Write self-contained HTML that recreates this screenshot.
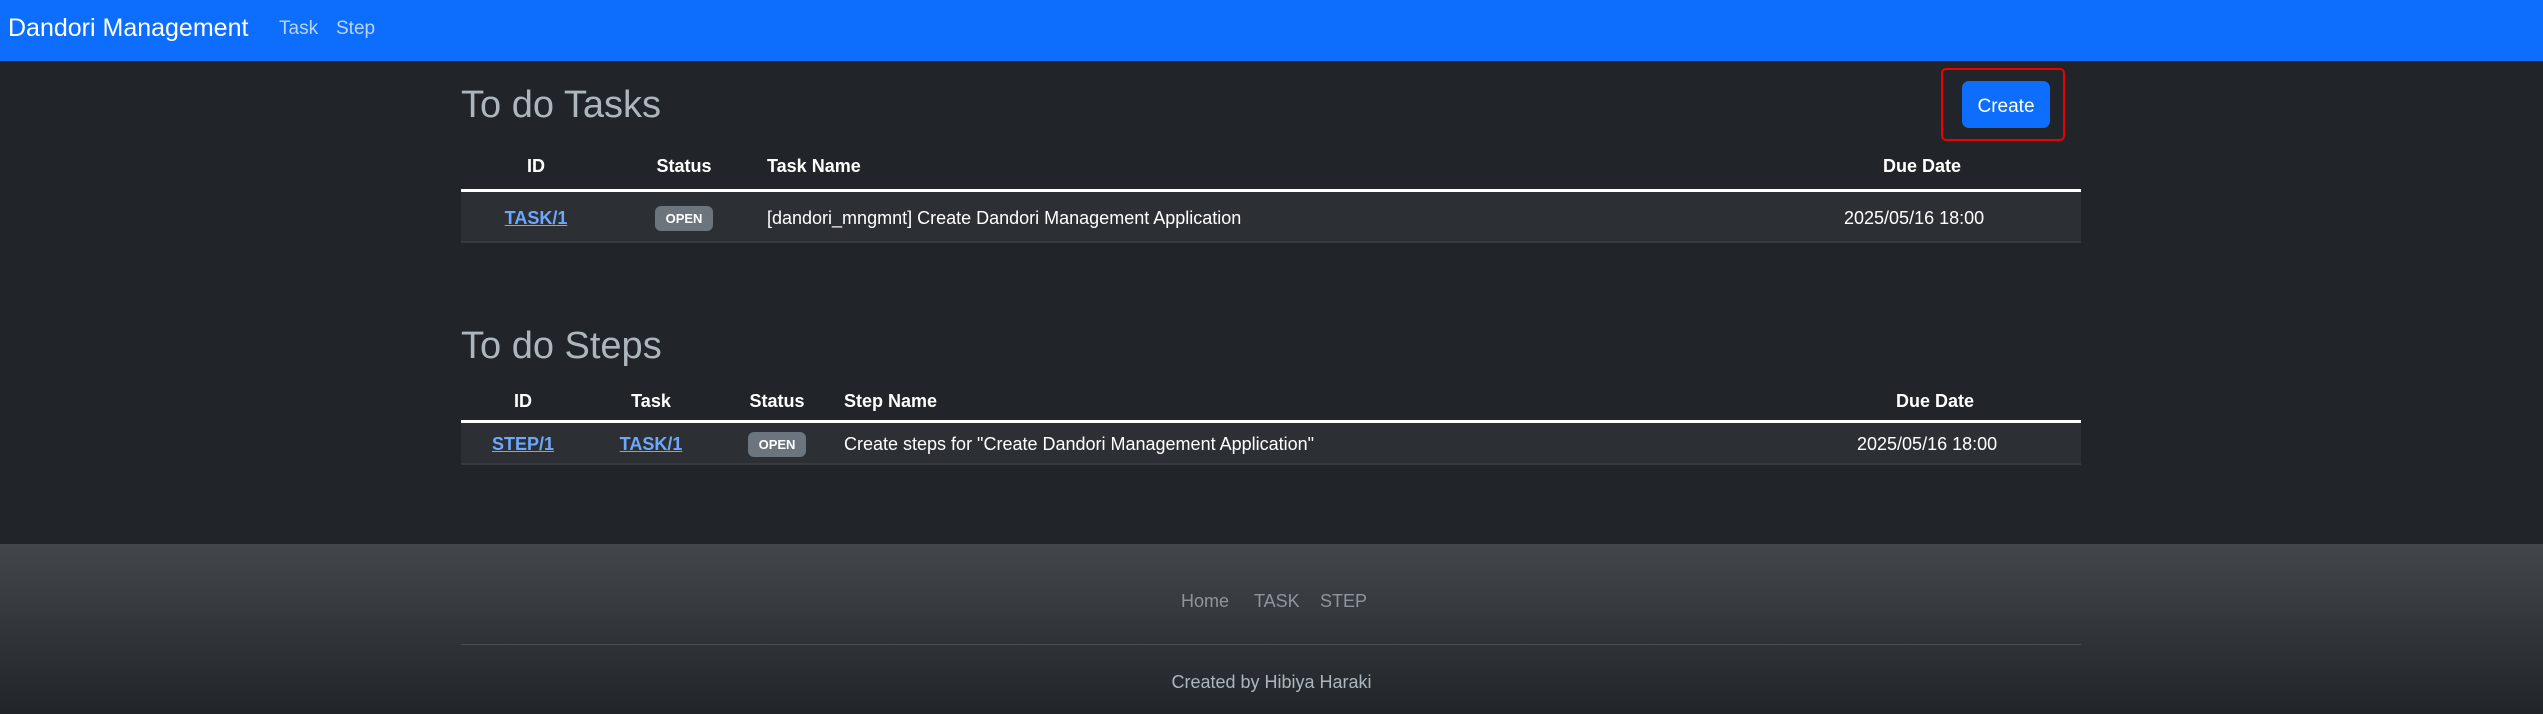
<!DOCTYPE html>
<html><head><meta charset="utf-8"><style>
*{margin:0;padding:0;box-sizing:border-box}
body{width:2543px;height:714px;background:#212529;font-family:"Liberation Sans",sans-serif;color:#dee2e6;position:relative;overflow:hidden}
.a{position:absolute;white-space:nowrap}
.nav{position:absolute;left:0;top:0;width:2543px;height:61px;background:#0d6efd}
.brand{left:8px;top:14px;font-size:25px;color:#fff}
.nl{top:18px;font-size:19px;color:#b6d4fe}
h2{position:absolute;font-size:38px;font-weight:500;color:#adb5bd}
.th{font-size:18px;font-weight:bold;color:#fff;transform:translateX(-50%)}
.thl{font-size:18px;font-weight:bold;color:#fff}
.line{position:absolute;left:461px;width:1620px;height:3px;background:#fff}
.row{position:absolute;left:461px;width:1620px;background:#2c3034;border-bottom:2px solid #373b3e}
.td{font-size:18px;color:#fff}
.lnk{color:#6ea8fe;text-decoration:underline;font-size:18px;font-weight:bold;transform:translateX(-50%)}
.badge{position:absolute;background:#6c757d;color:#fff;font-size:13px;font-weight:bold;border-radius:6px;text-align:center;line-height:25px;height:25px}
.foot{position:absolute;left:0;top:544px;width:2543px;height:170px;background:linear-gradient(#43474b,#212529)}
.fl{font-size:18px;color:#8e959c;top:47px}
</style></head><body>
<div class="nav">
<div class="a brand">Dandori Management</div>
<div class="a nl" style="left:279px">Task</div>
<div class="a nl" style="left:336px">Step</div>
</div>

<h2 style="left:461px;top:84px">To do Tasks</h2>
<div style="position:absolute;left:1941px;top:68px;width:124px;height:73px;border:2px solid #e00;border-radius:5px"></div>
<div style="position:absolute;left:1962px;top:81px;width:88px;height:47px;background:#0d6efd;border-radius:7px;color:#fff;font-size:19px;text-align:center;line-height:51px">Create</div>

<div class="a th" style="left:536px;top:156px">ID</div>
<div class="a th" style="left:684px;top:156px">Status</div>
<div class="a thl" style="left:767px;top:156px">Task Name</div>
<div class="a th" style="left:1922px;top:156px">Due Date</div>
<div class="line" style="top:189px"></div>
<div class="row" style="top:192px;height:51px"></div>
<div class="a lnk" style="left:536px;top:208px">TASK/1</div>
<div class="badge" style="left:655px;top:206px;width:58px">OPEN</div>
<div class="a td" style="left:767px;top:208px">[dandori_mngmnt] Create Dandori Management Application</div>
<div class="a td" style="left:1844px;top:208px">2025/05/16 18:00</div>

<h2 style="left:461px;top:325px">To do Steps</h2>
<div class="a th" style="left:523px;top:391px">ID</div>
<div class="a th" style="left:651px;top:391px">Task</div>
<div class="a th" style="left:777px;top:391px">Status</div>
<div class="a thl" style="left:844px;top:391px">Step Name</div>
<div class="a th" style="left:1935px;top:391px">Due Date</div>
<div class="line" style="top:420px"></div>
<div class="row" style="top:423px;height:42px"></div>
<div class="a lnk" style="left:523px;top:434px">STEP/1</div>
<div class="a lnk" style="left:651px;top:434px">TASK/1</div>
<div class="badge" style="left:748px;top:432px;width:58px">OPEN</div>
<div class="a td" style="left:844px;top:434px">Create steps for "Create Dandori Management Application"</div>
<div class="a td" style="left:1857px;top:434px">2025/05/16 18:00</div>

<div class="foot">
<div class="a fl" style="left:1181px">Home</div>
<div class="a fl" style="left:1254px">TASK</div>
<div class="a fl" style="left:1320px">STEP</div>
<div style="position:absolute;left:461px;top:100px;width:1620px;height:1px;background:#4a4e52"></div>
<div class="a" style="left:0;width:2543px;text-align:center;top:128px;font-size:18px;color:#adb5bd">Created by Hibiya Haraki</div>
</div>
</body></html>
